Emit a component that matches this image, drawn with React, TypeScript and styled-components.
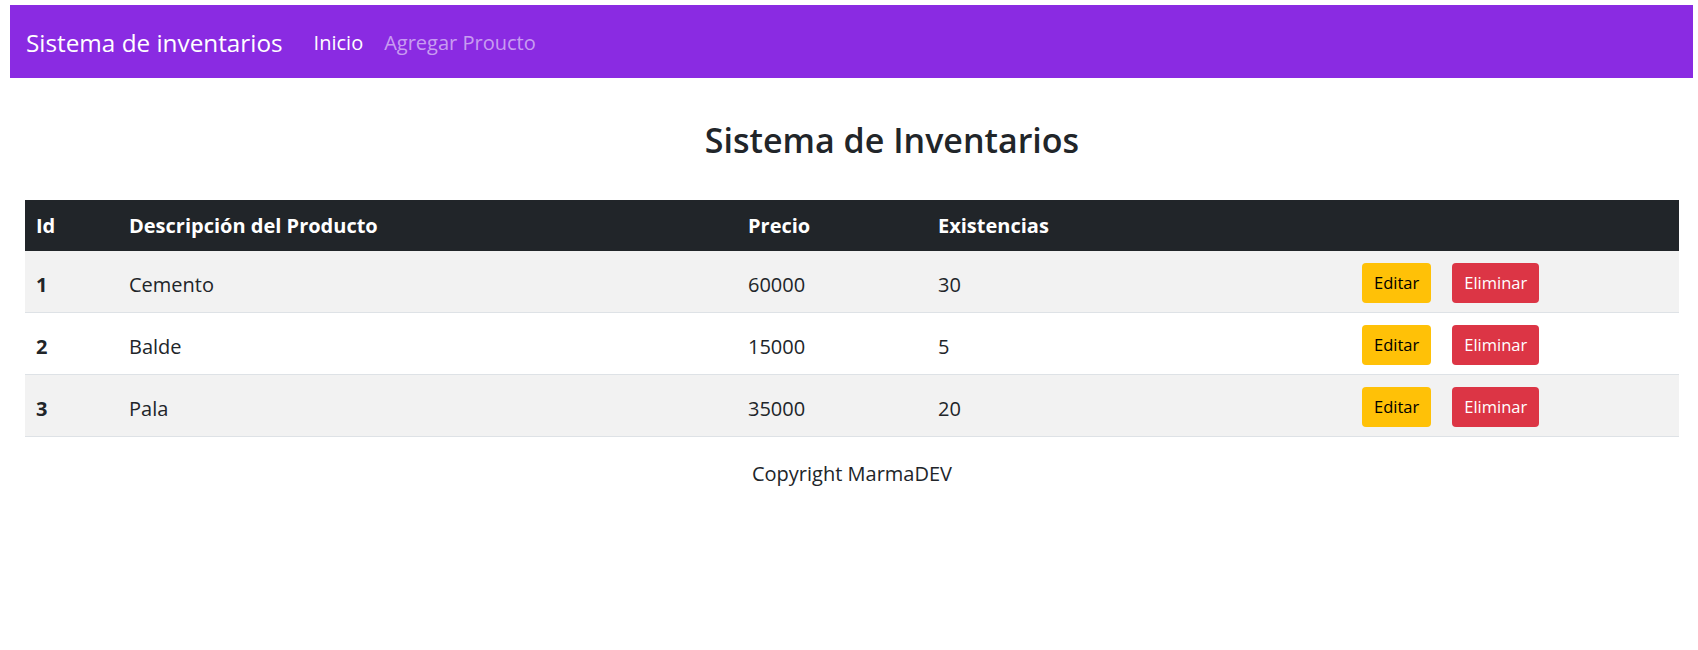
import React from "react";
import styled, { createGlobalStyle } from "styled-components";

const GlobalStyle = createGlobalStyle`
  html, body {
    margin: 0;
    padding: 0;
    background: #fff;
  }
  body {
    padding: 5px 5px 0 10px;
    font-family: "Open Sans", "Noto Sans", sans-serif;
    color: #212529;
  }
  * {
    box-sizing: border-box;
  }
`;

const productos = [
  { id: 1, descripcion: "Cemento", precio: 60000, existencias: 30 },
  { id: 2, descripcion: "Balde", precio: 15000, existencias: 5 },
  { id: 3, descripcion: "Pala", precio: 35000, existencias: 20 },
];

export default function App() {
  return (
    <>
      <GlobalStyle />
      <Navbar>
        <Brand>Sistema de inventarios</Brand>
        <NavLinks>
          <NavLink $active>Inicio</NavLink>
          <NavLink>Agregar Proucto</NavLink>
        </NavLinks>
      </Navbar>

      <Container>
        <Title>Sistema de Inventarios</Title>

        <Table>
          <thead>
            <tr>
              <Th $width={93}>Id</Th>
              <Th $width={619}>Descripción del Producto</Th>
              <Th $width={190}>Precio</Th>
              <Th $width={424}>Existencias</Th>
              <Th />
            </tr>
          </thead>
          <tbody>
            {productos.map((p, i) => (
              <Row key={p.id} $striped={i % 2 === 0}>
                <IdCell>{p.id}</IdCell>
                <Td>{p.descripcion}</Td>
                <Td>{p.precio}</Td>
                <Td>{p.existencias}</Td>
                <Td>
                  <Actions>
                    <Button $variant="warning">Editar</Button>
                    <Button $variant="danger">Eliminar</Button>
                  </Actions>
                </Td>
              </Row>
            ))}
          </tbody>
        </Table>

        <Footer>Copyright MarmaDEV</Footer>
      </Container>
    </>
  );
}

const Navbar = styled.nav`
  display: flex;
  align-items: center;
  height: 73px;
  padding: 1px 16px 0;
  background: #8a2be2;
`;

const Brand = styled.a`
  color: #fff;
  font-size: 24.3px;
  font-weight: 400;
  margin-right: 31px;
  white-space: nowrap;
`;

const NavLinks = styled.div`
  display: flex;
  gap: 21px;
`;

const NavLink = styled.a<{ $active?: boolean }>`
  font-size: 20px;
  color: ${({ $active }) => ($active ? "#fff" : "rgba(255, 255, 255, 0.55)")};
  cursor: pointer;
`;

const Container = styled.main`
  padding: 0 14px 0 15px;
`;

const Title = styled.h1`
  margin: 42px 0 39px;
  padding-left: 80px;
  text-align: center;
  font-size: 34px;
  font-weight: 600;
  line-height: 1.2;
`;

const Table = styled.table`
  width: 100%;
  border-collapse: collapse;
  table-layout: fixed;
  font-size: 20px;
  line-height: 1.5;
`;

const Th = styled.th<{ $width?: number }>`
  width: ${({ $width }) => ($width ? `${$width}px` : "auto")};
  height: 51px;
  padding: 1px 11px 0;
  text-align: left;
  font-weight: 700;
  color: #fff;
  background: #212529;
`;

const Row = styled.tr<{ $striped: boolean }>`
  background: ${({ $striped }) => ($striped ? "#f2f2f2" : "#fff")};
  border-bottom: 1px solid #dee2e6;
`;

const Td = styled.td`
  height: 62px;
  padding: 6px 11px 0;
  vertical-align: middle;
`;

const IdCell = styled(Td)`
  font-weight: 700;
`;

const Actions = styled.div`
  display: flex;
  align-items: center;
  gap: 21px;
  margin-top: -4px;
`;

const Button = styled.button<{ $variant: "warning" | "danger" }>`
  height: 40px;
  padding: 0 12px;
  border: none;
  border-radius: 4px;
  font-family: "Open Sans", "Noto Sans", sans-serif;
  font-size: 16.5px;
  cursor: pointer;
  background: ${({ $variant }) => ($variant === "warning" ? "#ffc107" : "#dc3545")};
  color: ${({ $variant }) => ($variant === "warning" ? "#000" : "#fff")};
`;

const Footer = styled.footer`
  margin-top: 22px;
  text-align: center;
  font-size: 20px;
  line-height: 1.5;
`;
